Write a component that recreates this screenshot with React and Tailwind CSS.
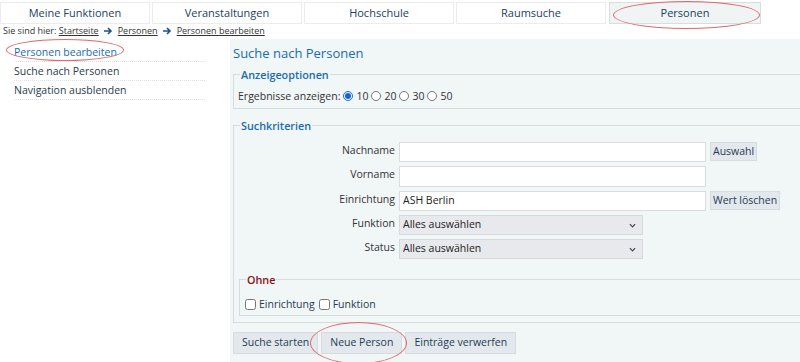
import React from "react";

const tabs = ["Meine Funktionen", "Veranstaltungen", "Hochschule", "Raumsuche", "Personen"];

function Arrow() {
  return (
    <svg width="9" height="8" viewBox="0 0 9 8" className="mx-[5px] inline-block">
      <path d="M0 4h6M4 1l3 3-3 3" stroke="#1d4f91" strokeWidth="1.6" fill="none" />
    </svg>
  );
}

function Ellipse({ className }) {
  return <div className={`pointer-events-none absolute rounded-[50%] border border-[#e06a6a] ${className}`} />;
}

function Field({ label, children }) {
  return (
    <div className="flex items-start gap-[4px]">
      <div className="w-[157px] text-right text-[10.5px] leading-[16px] text-[#333]">{label}</div>
      {children}
    </div>
  );
}

function Select() {
  return (
    <div className="flex h-[20px] w-[244px] items-center justify-between border border-[#d5d9dc] bg-[#e7e9ec] pl-[3px] pr-[6px] text-[10.5px] text-[#222]">
      <span>Alles auswählen</span>
      <svg width="7" height="5" viewBox="0 0 8 5">
        <path d="M1 1l3 3 3-3" stroke="#445" strokeWidth="1.4" fill="none" />
      </svg>
    </div>
  );
}

function Btn({ children, h = "h-[19px]", px = "px-[2px]" }) {
  return (
    <div className={`flex ${h} items-center border border-[#d5dbe0] bg-[#e3e8ec] ${px} text-[10.5px] text-[#1f3b57]`}>
      {children}
    </div>
  );
}

export default function App() {
  return (
    <div className="relative h-[362px] w-[800px] overflow-hidden bg-white font-['Open_Sans',sans-serif] text-[#333]">
      {/* tabs */}
      <div className="flex gap-[2px] pt-[2px]">
        {tabs.map((t, i) => (
          <div
            key={t}
            className={`flex h-[22px] w-[150px] shrink-0 items-center justify-center border text-[11px] text-[#23415f] ${
              i === 4 ? "ml-[1px] w-[152px] border-[#d8dde0] bg-[#f0f4f5]" : "border-[#ececec] bg-white"
            }`}
          >
            {t}
          </div>
        ))}
      </div>

      {/* breadcrumb */}
      <div className="flex items-center pl-[3px] pt-[1px] text-[9px] leading-[12px] text-[#333]">
        <span>Sie sind hier:&nbsp;</span>
        <span className="underline">Startseite</span>
        <Arrow />
        <span className="underline">Personen</span>
        <Arrow />
        <span className="underline">Personen bearbeiten</span>
      </div>

      <div className="mt-[2px] flex">
        {/* left nav */}
        <div className="w-[230px] shrink-0 pl-[14px] pr-[25px] pt-[4px] text-[10.5px] leading-[14px]">
          <div className="border-b border-dotted border-[#dde2e6] py-[2px] text-[#1a6bb0]">Personen bearbeiten</div>
          <div className="border-b border-dotted border-[#dde2e6] py-[2px] text-[#2a3b4c]">Suche nach Personen</div>
          <div className="border-b border-dotted border-[#dde2e6] py-[2px] text-[#2a3b4c]">Navigation ausblenden</div>
        </div>

        {/* main */}
        <div className="h-[330px] w-[660px] shrink-0 bg-[#f1f6f7] pl-[3px] pt-[5px]">
          <div className="text-[13px] leading-[18px] text-[#1a6bb0]">Suche nach Personen</div>

          <fieldset className="mt-[5px] border border-[#d6dbde] pb-[5px] pl-[4px]">
            <legend className="ml-[2px] px-[1px] text-[10.8px] font-semibold leading-[15px] text-[#1a6bb0]">Anzeigeoptionen</legend>
            <div className="flex items-center gap-[3px] pt-[7px] text-[10.5px] leading-[14px] text-[#333]">
              <span>Ergebnisse anzeigen:</span>
              <input type="radio" defaultChecked name="n" className="m-0 h-[10px] w-[10px] accent-[#1565d8]" />
              <span>10</span>
              <input type="radio" name="n" className="m-0 h-[10px] w-[10px]" />
              <span>20</span>
              <input type="radio" name="n" className="m-0 h-[10px] w-[10px]" />
              <span>30</span>
              <input type="radio" name="n" className="m-0 h-[10px] w-[10px]" />
              <span>50</span>
            </div>
          </fieldset>

          <fieldset className="mt-[9px] border border-[#d6dbde] pb-[6px] pl-[4px] pr-[2px]">
            <legend className="ml-[2px] px-[1px] text-[10.8px] font-semibold leading-[15px] text-[#1a6bb0]">Suchkriterien</legend>
            <div className="mt-[9px] flex flex-col gap-[4px]">
              <Field label="Nachname">
                <div className="h-[20px] w-[307px] border border-[#d8dcdf] bg-white" />
                <Btn>Auswahl</Btn>
              </Field>
              <Field label="Vorname">
                <div className="h-[21px] w-[307px] border border-[#d8dcdf] bg-white" />
              </Field>
              <Field label="Einrichtung">
                <div className="flex h-[20px] w-[307px] items-center border border-[#d8dcdf] bg-white pl-[3px] text-[10.5px] text-[#222]">
                  ASH Berlin
                </div>
                <Btn>Wert löschen</Btn>
              </Field>
              <Field label="Funktion">
                <Select />
              </Field>
              <Field label="Status">
                <Select />
              </Field>
            </div>
            <fieldset className="ml-[1px] mt-[13px] border border-[#d6dbde] pb-[4px] pl-[5px]">
              <legend className="ml-[1px] px-[1px] text-[10.8px] font-semibold leading-[15px] text-[#8b1010]">Ohne</legend>
              <div className="flex items-center gap-[3px] pt-[10px] text-[10.5px] leading-[14px] text-[#2a3b4c]">
                <input type="checkbox" className="m-0 h-[11px] w-[11px]" />
                <span>Einrichtung</span>
                <input type="checkbox" className="m-0 ml-[1px] h-[11px] w-[11px]" />
                <span>Funktion</span>
              </div>
            </fieldset>
          </fieldset>

          <div className="mt-[9px] flex gap-[3px]">
            <Btn h="h-[22px]" px="px-[8px]">Suche starten</Btn>
            <Btn h="h-[22px]" px="px-[8px]">Neue Person</Btn>
            <Btn h="h-[22px]" px="px-[8px]">Einträge verwerfen</Btn>
          </div>
        </div>
      </div>

      {/* annotation ellipses */}
      <Ellipse className="left-[6px] top-[39px] h-[22px] w-[118px]" />
      <Ellipse className="left-[613px] top-[1px] h-[28px] w-[147px]" />
      <Ellipse className="left-[310px] top-[322px] h-[42px] w-[97px]" />
    </div>
  );
}
